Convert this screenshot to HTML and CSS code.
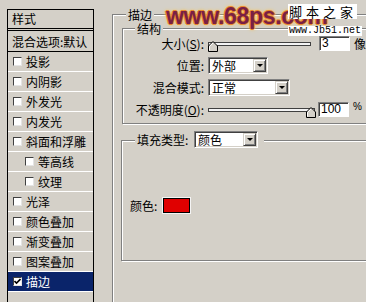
FILE: index.html
```html
<!DOCTYPE html>
<html lang="zh-CN">
<head>
    <meta charset="UTF-8">
    <title>图层样式 - 描边</title>
    <link rel="stylesheet" href="styles.css">
</head>
<body>
    <div class="dialog">
        <div class="styles-panel">
            <div class="panel-head">样式</div>
            <div class="panel-row blend">混合选项:默认</div>
            <div class="panel-row"><span class="check"></span>投影</div>
            <div class="panel-row"><span class="check"></span>内阴影</div>
            <div class="panel-row"><span class="check"></span>外发光</div>
            <div class="panel-row"><span class="check"></span>内发光</div>
            <div class="panel-row"><span class="check"></span>斜面和浮雕</div>
            <div class="panel-row sub"><span class="check"></span>等高线</div>
            <div class="panel-row sub"><span class="check"></span>纹理</div>
            <div class="panel-row"><span class="check"></span>光泽</div>
            <div class="panel-row"><span class="check"></span>颜色叠加</div>
            <div class="panel-row"><span class="check"></span>渐变叠加</div>
            <div class="panel-row"><span class="check"></span>图案叠加</div>
            <div class="panel-row active">
                <span class="check">
                    <svg width="7" height="7" viewBox="0 0 7 7"><path d="M0.5 3 L2.5 5 L6.5 1" fill="none" stroke="#000" stroke-width="1.6"/></svg>
                </span>描边
            </div>
        </div>

        <div class="settings">
            <div class="group stroke-group">
                <span class="legend">描边</span>

                <div class="group struct-group">
                    <span class="legend struct-legend">结构</span>

                    <div class="field-label">大小(<u>S</u>):</div>
                    <div class="field">
                        <svg class="slider" width="103" height="17" viewBox="0 0 103 17">
                            <rect x="0.5" y="7.5" width="102" height="3" fill="#f4f4f4" stroke="#404040"/>
                            <polygon points="0.5,16.5 0.5,11 5,6.5 9.5,11 9.5,16.5" fill="#d4d0c8" stroke="#000"/>
                            <polyline points="1.5,15.5 1.5,11.4 5,8" fill="none" stroke="#fff"/>
                        </svg>
                        <div class="num-input gap-wide">3</div>
                        <span class="unit">像素</span>
                    </div>

                    <div class="field-label">位置:</div>
                    <div class="field">
                        <div class="select pos-select">
                            <span class="select-value">外部</span>
                            <span class="select-btn"></span>
                        </div>
                    </div>

                    <div class="field-label">混合模式:</div>
                    <div class="field">
                        <div class="select mode-select">
                            <span class="select-value">正常</span>
                            <span class="select-btn"></span>
                        </div>
                    </div>

                    <div class="field-label">不透明度(<u>O</u>):</div>
                    <div class="field">
                        <svg class="slider" width="108" height="17" viewBox="0 0 108 17">
                            <rect x="0.5" y="7.5" width="106" height="3" fill="#f4f4f4" stroke="#404040"/>
                            <polygon points="98.5,16.5 98.5,11 103,6.5 107.5,11 107.5,16.5" fill="#d4d0c8" stroke="#000"/>
                            <polyline points="99.5,15.5 99.5,11.4 103,8" fill="none" stroke="#fff"/>
                        </svg>
                        <div class="num-input gap-narrow">100</div>
                        <span class="unit percent">%</span>
                    </div>
                </div>

                <div class="group fill-group">
                    <div class="legend fill-legend">
                        <span class="fill-label">填充类型:</span>
                        <div class="select fill-select">
                            <span class="select-value">颜色</span>
                            <span class="select-btn"></span>
                        </div>
                    </div>
                    <div class="color-row">
                        <span class="color-label">颜色:</span>
                        <span class="swatch"></span>
                    </div>
                </div>
            </div>
        </div>

        <div class="watermark">www.68ps.com</div>
        <div class="site-tag">
            <span class="site-name">脚本之家</span>
            <span class="site-url">www.Jb51.net</span>
        </div>
    </div>
</body>
</html>
```

FILE: styles.css
```css
body {
    margin: 0;
    background-color: #d4d0c8;
    color: #000;
    font-family: "Noto Sans CJK SC", "Liberation Sans", sans-serif;
    font-size: 12px;
    overflow: hidden;
}
.dialog {
    position: relative;
    display: flex;
    align-items: flex-start;
    width: 366px;
    height: 302px;
    overflow: hidden;
}

/* left list of layer styles */
.styles-panel {
    flex: none;
    width: 87px;
    height: 330px;
    margin: 9px 0 0 7px;
    border: 1px solid #000;
    box-sizing: border-box;
}
.panel-head {
    height: 18px;
    line-height: 18px;
    padding-left: 4px;
    border-bottom: 3px double #000;
}
.panel-row {
    display: flex;
    align-items: center;
    height: 19px;
    padding-left: 5px;
    border-bottom: 1px solid #fff;
    white-space: nowrap;
}
.panel-row.blend {
    height: 20px;
    padding-left: 4px;
    border-bottom-color: #000;
}
.panel-row.sub {
    padding-left: 17px;
}
.panel-row.active {
    background-color: #0a246a;
    color: #fff;
}
.check {
    display: flex;
    align-items: center;
    justify-content: center;
    flex: none;
    width: 9px;
    height: 9px;
    margin-right: 4px;
    box-sizing: border-box;
    background-color: #fff;
    border: 1px solid;
    border-color: #404040 #e4e4e4 #e4e4e4 #404040;
}

/* group boxes */
.settings {
    flex: none;
    margin: 14px 0 0 18px;
}
.group {
    position: relative;
    box-sizing: border-box;
    border: 1px solid #808080;
    box-shadow: 1px 1px 0 #fff, inset 1px 1px 0 #fff;
}
.legend {
    position: absolute;
    left: 13px;
    top: -7px;
    padding: 0 2px;
    line-height: 13px;
    background-color: #d4d0c8;
}
.stroke-group {
    width: 290px;
    height: 320px;
    padding: 13px 0 0 9px;
}
.struct-group {
    display: grid;
    grid-template-columns: 81px auto;
    grid-auto-rows: 17px;
    row-gap: 5px;
    column-gap: 4px;
    align-content: start;
    width: 270px;
    height: 96px;
    padding-top: 6px;
}
.struct-legend {
    left: 12px;
    top: -7px;
}
.field-label {
    text-align: right;
    line-height: 17px;
    white-space: nowrap;
}
.field {
    display: flex;
    align-items: center;
    white-space: nowrap;
}
.slider {
    display: block;
    flex: none;
}

/* windows style controls */
.num-input {
    width: 31px;
    height: 15px;
    box-sizing: border-box;
    padding-left: 2px;
    background-color: #fff;
    border: 1px solid;
    border-color: #808080 #fff #fff #808080;
    box-shadow: inset 1px 1px 0 #404040;
    font-family: "Liberation Sans", sans-serif;
    font-size: 12px;
    line-height: 13px;
}
.gap-wide {
    margin-left: 8px;
}
.gap-narrow {
    margin-left: 2px;
}
.unit {
    margin-left: 4px;
}
.unit.percent {
    align-self: flex-start;
    font-family: "Liberation Sans", sans-serif;
    font-size: 10px;
    line-height: 12px;
}
.select {
    display: flex;
    height: 17px;
    box-sizing: border-box;
    padding: 1px;
    background-color: #fff;
    border: 1px solid;
    border-color: #808080 #fff #fff #808080;
    box-shadow: inset 1px 1px 0 #404040, inset -1px -1px 0 #d4d0c8;
}
.select-value {
    flex: 1;
    padding-left: 2px;
    line-height: 13px;
}
.select-btn {
    display: flex;
    align-items: center;
    justify-content: center;
    width: 13px;
    height: 13px;
    box-sizing: border-box;
    background-color: #d4d0c8;
    border: 1px solid;
    border-color: #d4d0c8 #404040 #404040 #d4d0c8;
    box-shadow: inset 1px 1px 0 #fff, inset -1px -1px 0 #808080;
}
.select-btn::after {
    content: "";
    border-left: 3px solid transparent;
    border-right: 3px solid transparent;
    border-top: 3px solid #000;
}
.pos-select {
    width: 60px;
}
.mode-select {
    width: 82px;
}
.fill-select {
    width: 64px;
}

/* fill type */
.fill-group {
    width: 270px;
    height: 121px;
    margin: 16px 0 0 -1px;
    padding: 57px 0 0 8px;
}
.fill-legend {
    display: flex;
    align-items: center;
    top: -10px;
    padding: 0 6px 0 2px;
}
.fill-label {
    width: 55px;
    white-space: nowrap;
}
.fill-select {
    margin-left: 2px;
}
.color-row {
    display: flex;
    align-items: center;
    height: 15px;
}
.color-label {
    width: 33px;
}
.swatch {
    width: 27px;
    height: 15px;
    box-sizing: border-box;
    border: 1px solid #000;
    background-color: #e00000;
    box-shadow: 0 0 0 1px #f4f4f4;
}

/* site watermark */
.watermark {
    position: absolute;
    left: 166px;
    top: 4px;
    font-family: "Liberation Sans", sans-serif;
    font-weight: bold;
    font-size: 23px;
    line-height: 24px;
    letter-spacing: -0.3px;
    color: #7a1f44;
    text-shadow: 1px 0 0 #e8872c, -1px 0 0 #e8872c, 0 1px 0 #e8872c, 0 -1px 0 #e8872c, 0 0 4px #ffd060, 0 0 3px #ffb040;
}
.site-tag {
    position: absolute;
    left: 288px;
    top: 4px;
    display: flex;
    flex-direction: column;
    align-items: flex-start;
}
.site-name {
    padding: 0 0 0 1px;
    background-color: #fff;
    font-size: 13px;
    line-height: 15px;
    letter-spacing: 4px;
}
.site-url {
    margin-top: 7px;
    padding: 0 1px;
    background-color: #fff;
    font-family: "Liberation Mono", monospace;
    font-size: 10px;
    line-height: 10px;
}
```
